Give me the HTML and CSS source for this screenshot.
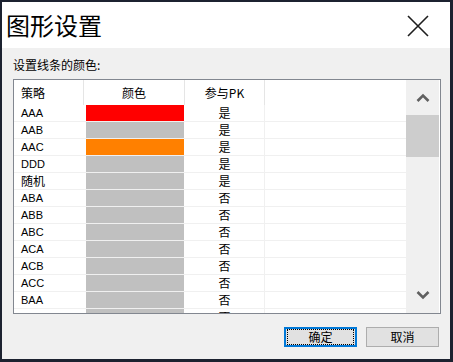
FILE: index.html
```html
<!DOCTYPE html>
<html lang="zh-CN">
  <head>
    <meta charset="UTF-8" />
    <title>图形设置</title>
    <link rel="stylesheet" href="styles.css">
  </head>
  <body>
    <div class="dialog">
      <div class="titlebar">
        <h1>图形设置</h1>
        <svg class="close" width="22" height="22" viewBox="0 0 22 22">
          <path d="M1 1 L21 21 M21 1 L1 21" stroke="#1e1e1e" stroke-width="1.6" fill="none" />
        </svg>
      </div>

      <div class="content">
        <p class="label">设置线条的颜色:</p>

        <div class="grid">
          <div class="list">
            <div class="head">
              <div class="cell name">策略</div>
              <div class="cell center">颜色</div>
              <div class="cell center">参与PK</div>
              <div class="cell"></div>
            </div>
            <div class="rows" id="rows"></div>
          </div>
          <div class="scrollbar">
            <div class="arrow">
              <svg width="14" height="9" viewBox="0 0 14 9"><path d="M1.5 8 L7 2.5 L12.5 8" stroke="#606060" stroke-width="2.6" fill="none" /></svg>
            </div>
            <div class="thumb"></div>
            <div class="track"></div>
            <div class="arrow">
              <svg width="14" height="9" viewBox="0 0 14 9"><path d="M1.5 1 L7 6.5 L12.5 1" stroke="#606060" stroke-width="2.6" fill="none" /></svg>
            </div>
          </div>
        </div>

        <div class="buttons">
          <button class="btn primary"><span>确定</span></button>
          <button class="btn"><span>取消</span></button>
        </div>
      </div>
    </div>

    <script>
      const data = [
        ["AAA", "#ff0000", "是"],
        ["AAB", "#c0c0c0", "是"],
        ["AAC", "#ff8000", "是"],
        ["DDD", "#c0c0c0", "是"],
        ["随机", "#c0c0c0", "是"],
        ["ABA", "#c0c0c0", "否"],
        ["ABB", "#c0c0c0", "否"],
        ["ABC", "#c0c0c0", "否"],
        ["ACA", "#c0c0c0", "否"],
        ["ACB", "#c0c0c0", "否"],
        ["ACC", "#c0c0c0", "否"],
        ["BAA", "#c0c0c0", "否"],
        ["BAB", "#c0c0c0", "否"],
      ];
      const rows = document.getElementById("rows");
      data.forEach(function (d) {
        const row = document.createElement("div");
        row.className = "row";
        row.innerHTML =
          '<div class="cell name' + (d[0] === "随机" ? " cjk" : "") + '">' + d[0] + "</div>" +
          '<div class="cell"><div class="swatch" style="background:' + d[1] + '"></div></div>' +
          '<div class="cell center cjk">' + d[2] + "</div>" +
          '<div class="cell"></div>';
        rows.appendChild(row);
      });
    </script>
  </body>
</html>
```

FILE: styles.css
```css
body {
  margin: 0;
  background-color: #1c2230;
  font-family: "Noto Sans CJK SC", "Liberation Sans", sans-serif;
}
.dialog {
  margin: 2px 3px 3px 2px;
  width: 448px;
  height: 357px;
  display: flex;
  flex-direction: column;
  background-color: #f0f0f0;
}
.titlebar {
  height: 46px;
  background-color: #fff;
  display: flex;
  align-items: center;
  justify-content: space-between;
  padding: 0 21px 0 4px;
}
.titlebar h1 {
  margin: 0;
  font-size: 24px;
  font-weight: normal;
  line-height: 30px;
  color: #000;
}
.close {
  margin-top: 1px;
}
.content {
  flex: 1;
  display: flex;
  flex-direction: column;
  padding: 9px 9px 0 11px;
}
.label {
  margin: 0 0 6px 0;
  font-size: 12px;
  line-height: 16px;
  color: #000;
}
.grid {
  height: 233px;
  border: 1px solid #828790;
  background-color: #fff;
  display: flex;
  overflow: hidden;
}
.list {
  width: 392px;
  display: flex;
  flex-direction: column;
  overflow: hidden;
}
.head,
.row {
  display: grid;
  grid-template-columns: 70px 101px 80px 1fr;
}
.head {
  height: 25px;
  font-size: 12px;
}
.head .cell {
  line-height: 25px;
  border-right: 1px solid #e5e5e5;
}
.head .cell:last-child {
  border-right: none;
}
.row {
  height: 16px;
  border-bottom: 1px solid #f0f0f0;
  font-family: "Liberation Sans", "Noto Sans CJK SC", sans-serif;
  font-size: 11px;
}
.row .cell {
  line-height: 16px;
}
.row .cell:nth-child(3) {
  border-right: 1px solid #f0f0f0;
}
.cell {
  color: #000;
  white-space: nowrap;
}
.cell.name {
  padding-left: 7px;
}
.cell.center {
  text-align: center;
}
.cjk {
  font-family: "Noto Sans CJK SC", sans-serif;
  font-size: 12px;
}
.swatch {
  height: 16px;
  margin: 0 1px 0 2px;
}
.scrollbar {
  width: 33px;
  display: flex;
  flex-direction: column;
  background-color: #f0f0f0;
}
.arrow {
  height: 35px;
  display: flex;
  align-items: center;
  justify-content: center;
}
.thumb {
  height: 42px;
  background-color: #cdcdcd;
}
.track {
  flex: 1;
}
.buttons {
  display: flex;
  justify-content: flex-end;
  gap: 9px;
  margin-top: 13px;
  padding-right: 2px;
}
.btn {
  width: 73px;
  height: 20px;
  padding: 0;
  background-color: #e1e1e1;
  border: 1px solid #adadad;
  font-family: "Noto Sans CJK SC", sans-serif;
  font-size: 12px;
  color: #000;
}
.btn span {
  display: block;
  line-height: 16px;
}
.btn.primary {
  border: 2px solid #0078d7;
  padding: 0;
}
.btn.primary span {
  margin: 0 1px;
  border: 1px dotted #000;
  line-height: 12px;
  height: 12px;
  padding: 1px 0;
}
```
